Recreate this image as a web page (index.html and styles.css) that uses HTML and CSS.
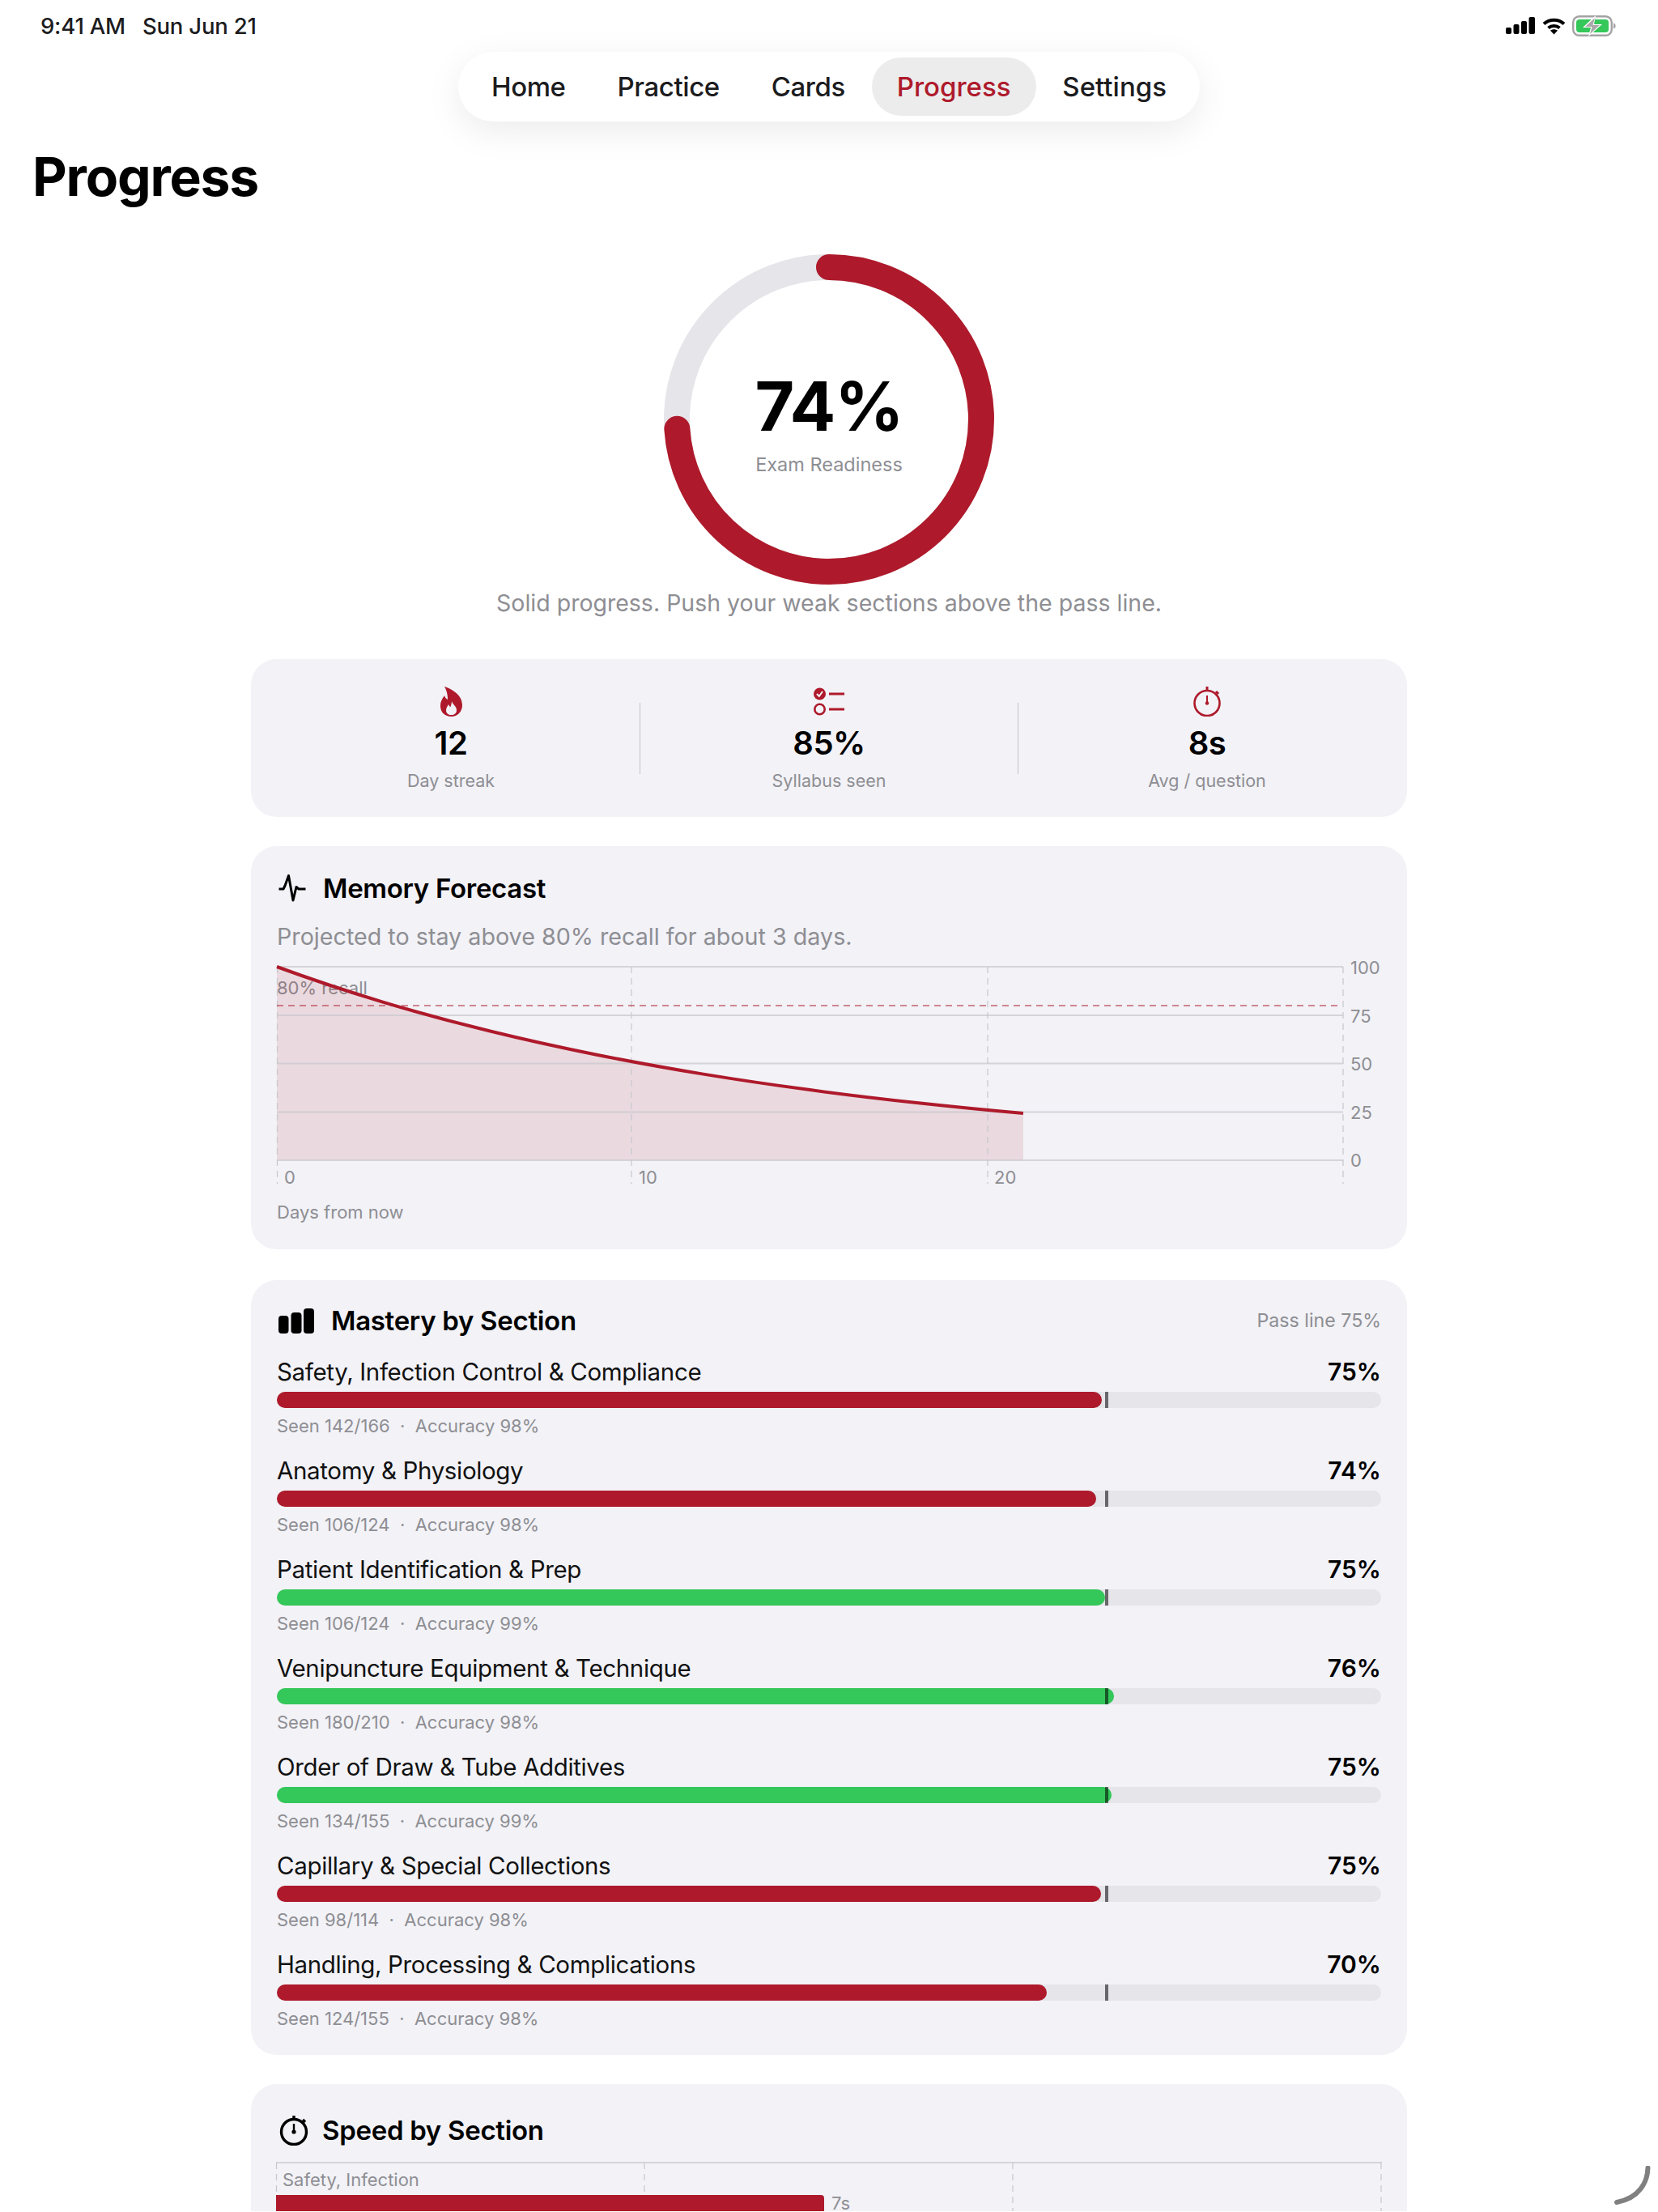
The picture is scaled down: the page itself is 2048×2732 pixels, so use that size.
FILE: index.html
```html
<!DOCTYPE html>
<html lang="en">
<head>
    <meta charset="UTF-8">
    <meta name="viewport" content="width=device-width, initial-scale=1.0">
    <title>Progress</title>
    <link rel="stylesheet" href="styles.css">
</head>
<body>
    <div class="status-bar">
        <div class="status-time"><span>9:41 AM</span><span>Sun Jun 21</span></div>
        <div class="status-icons">
            <svg width="37" height="22" viewBox="0 0 37 22"><rect x="0" y="13" width="7" height="8" rx="2"/><rect x="9.5" y="9" width="7" height="12" rx="2"/><rect x="19" y="5" width="7" height="16" rx="2"/><rect x="28.5" y="0" width="7.5" height="21" rx="2"/></svg>
            <svg width="29" height="21" viewBox="0 0 29 21"><path d="M2 7.5C9 1 20 1 27 7.5" class="wifi-arc"/><path d="M7.5 12.5C11.5 9 17.5 9 21.5 12.5" class="wifi-arc"/><path d="M14.5 20.5L10 15.8C12.6 13.8 16.4 13.8 19 15.8Z"/></svg>
            <svg width="54" height="26" viewBox="0 0 54 26"><rect x="1.2" y="1.2" width="47.6" height="23.6" rx="7.5" class="batt-shell"/><path d="M51 9.5C53 10 53.6 11.5 53.6 13S53 16 51 16.5Z" class="batt-nub"/><rect x="5" y="5" width="40" height="16" rx="4" class="batt-level"/><path d="M29 0L13 15H23L20 26L37 11H27Z" class="batt-gap"/><path d="M28 3L16 14H24.5L22 23L34 12H25.5Z" class="batt-bolt"/></svg>
        </div>
    </div>

    <nav class="top-nav">
        <a href="#home">Home</a>
        <a href="#practice">Practice</a>
        <a href="#cards">Cards</a>
        <a href="#progress" class="active">Progress</a>
        <a href="#settings">Settings</a>
    </nav>

    <h1 class="page-title">Progress</h1>

    <main class="content">
        <section class="readiness">
            <div class="ring">
                <svg width="408" height="408" viewBox="0 0 408 408">
                    <circle cx="204" cy="204" r="188" class="ring-track"/>
                    <circle cx="204" cy="204" r="188" class="ring-fill" pathLength="100" stroke-dasharray="74 100" transform="rotate(-90 204 204)"/>
                </svg>
                <div class="ring-label">
                    <div class="ring-value">74%</div>
                    <div class="ring-caption">Exam Readiness</div>
                </div>
            </div>
            <p class="readiness-note">Solid progress. Push your weak sections above the pass line.</p>
        </section>

        <section class="card stats">
            <div class="stat">
                <svg class="stat-icon" width="27" height="37" viewBox="0 0 27 37">
                    <path class="icon-red" d="M5 0C14 3 27 10 27 23C27 31 21 37 13.5 37C6 37 0 32 0 24C0 18 3 14 5 11C6 14 7 15 9 16C9 10 8 5 5 0Z"/>
                    <path class="icon-cut" d="M14 18C15 22 20 24 20 29C20 33 17 35 13.5 35C10 35 7 33 7 29C7 26 9 24 10 22C11 24 11.5 25 12.5 25C13 23 14 21 14 18Z"/>
                </svg>
                <div class="stat-value">12</div>
                <div class="stat-label">Day streak</div>
            </div>
            <div class="stat-sep"></div>
            <div class="stat">
                <svg class="stat-icon" width="38" height="37" viewBox="0 0 38 37">
                    <circle class="icon-red" cx="7.5" cy="9" r="7.5"/>
                    <path class="icon-tick" d="M4 9L6.8 12L11 6"/>
                    <circle class="icon-ring" cx="7.5" cy="28" r="6.2"/>
                    <path class="icon-dash" d="M19 9H38M19 28H38"/>
                </svg>
                <div class="stat-value">85%</div>
                <div class="stat-label">Syllabus seen</div>
            </div>
            <div class="stat-sep"></div>
            <div class="stat">
                <svg class="stat-icon" width="38" height="37" viewBox="0 0 38 37">
                    <circle class="icon-ring" cx="19" cy="20.5" r="15.5"/>
                    <path class="icon-dash" d="M19 0V5M30 6L33 9"/>
                    <path class="icon-hand" d="M19 11V20"/>
                    <circle class="icon-red" cx="19" cy="20.5" r="2.2"/>
                </svg>
                <div class="stat-value">8s</div>
                <div class="stat-label">Avg / question</div>
            </div>
        </section>

        <section class="card forecast">
            <div class="card-head">
                <svg class="head-icon" width="34" height="34" viewBox="0 0 34 34"><path class="wave" d="M0.5 18H6L8 14L12.5 1.5L18 32L22 15.5L25 18H33.5"/></svg>
                <h2>Memory Forecast</h2>
            </div>
            <p class="card-sub">Projected to stay above 80% recall for about 3 days.</p>
            <svg class="chart" width="1363" height="280" viewBox="0 -4 1363 280">
                <text x="0" y="34" class="axis-text">80% recall</text>
                <path class="curve-area" d="M0 0C43.9 16.1 87.8 30.6 131.7 43.8C175.6 57 219.5 68.8 263.4 79.5C307.3 90.3 351.2 99.9 395.1 108.7C439 117.5 482.9 125.4 526.8 132.6C570.7 139.8 614.6 146.2 658.5 152.1C702.4 158 746.3 163.2 790.2 168C834.1 172.8 878 177.1 921.9 181V239H0Z"/>
                <path class="grid-h" d="M0 0H1317M0 60H1317M0 119.5H1317M0 179.5H1317M0 239H1317"/>
                <path class="grid-v" d="M0.5 0V268M438 0V268M878 0V268M1317 0V268"/>
                <path class="goal-line" d="M0 48H1310"/>
                <path class="curve-line" d="M0 0C43.9 16.1 87.8 30.6 131.7 43.8C175.6 57 219.5 68.8 263.4 79.5C307.3 90.3 351.2 99.9 395.1 108.7C439 117.5 482.9 125.4 526.8 132.6C570.7 139.8 614.6 146.2 658.5 152.1C702.4 158 746.3 163.2 790.2 168C834.1 172.8 878 177.1 921.9 181"/>
                <text x="1326" y="9" class="axis-text">100</text>
                <text x="1326" y="69" class="axis-text">75</text>
                <text x="1326" y="128" class="axis-text">50</text>
                <text x="1326" y="188" class="axis-text">25</text>
                <text x="1326" y="247" class="axis-text">0</text>
                <text x="9" y="268" class="axis-text">0</text>
                <text x="447" y="268" class="axis-text">10</text>
                <text x="886" y="268" class="axis-text">20</text>
            </svg>
            <div class="chart-note">Days from now</div>
        </section>

        <section class="card mastery">
            <div class="card-head">
                <svg class="head-icon" width="44" height="31" viewBox="0 0 44 31"><rect x="0" y="9" width="12.5" height="22" rx="4"/><rect x="15.5" y="5" width="13" height="26" rx="4"/><rect x="31" y="0" width="13" height="31" rx="4"/></svg>
                <h2>Mastery by Section</h2>
                <span class="head-note">Pass line 75%</span>
            </div>
            <div class="section-row">
                <div class="row-top"><span>Safety, Infection Control &amp; Compliance</span><b>75%</b></div>
                <div class="bar"><div class="bar-fill" style="width:74.7%"></div><div class="bar-mark"></div></div>
                <div class="row-meta">Seen 142/166 &nbsp;·&nbsp; Accuracy 98%</div>
            </div>
            <div class="section-row">
                <div class="row-top"><span>Anatomy &amp; Physiology</span><b>74%</b></div>
                <div class="bar"><div class="bar-fill" style="width:74.2%"></div><div class="bar-mark"></div></div>
                <div class="row-meta">Seen 106/124 &nbsp;·&nbsp; Accuracy 98%</div>
            </div>
            <div class="section-row">
                <div class="row-top"><span>Patient Identification &amp; Prep</span><b>75%</b></div>
                <div class="bar"><div class="bar-fill good" style="width:75%"></div><div class="bar-mark"></div></div>
                <div class="row-meta">Seen 106/124 &nbsp;·&nbsp; Accuracy 99%</div>
            </div>
            <div class="section-row">
                <div class="row-top"><span>Venipuncture Equipment &amp; Technique</span><b>76%</b></div>
                <div class="bar"><div class="bar-fill good" style="width:75.8%"></div><div class="bar-mark"></div></div>
                <div class="row-meta">Seen 180/210 &nbsp;·&nbsp; Accuracy 98%</div>
            </div>
            <div class="section-row">
                <div class="row-top"><span>Order of Draw &amp; Tube Additives</span><b>75%</b></div>
                <div class="bar"><div class="bar-fill good" style="width:75.6%"></div><div class="bar-mark"></div></div>
                <div class="row-meta">Seen 134/155 &nbsp;·&nbsp; Accuracy 99%</div>
            </div>
            <div class="section-row">
                <div class="row-top"><span>Capillary &amp; Special Collections</span><b>75%</b></div>
                <div class="bar"><div class="bar-fill" style="width:74.6%"></div><div class="bar-mark"></div></div>
                <div class="row-meta">Seen 98/114 &nbsp;·&nbsp; Accuracy 98%</div>
            </div>
            <div class="section-row">
                <div class="row-top"><span>Handling, Processing &amp; Complications</span><b>70%</b></div>
                <div class="bar"><div class="bar-fill" style="width:69.7%"></div><div class="bar-mark"></div></div>
                <div class="row-meta">Seen 124/155 &nbsp;·&nbsp; Accuracy 98%</div>
            </div>
        </section>

        <section class="card speed">
            <div class="card-head">
                <svg class="head-icon" width="38" height="38" viewBox="0 0 38 38">
                    <circle class="stroke-dark" cx="19" cy="21" r="15.5"/>
                    <path class="stroke-dark" d="M19 1V6M30 6L33 9"/>
                    <path class="hand-dark" d="M19 11V21"/>
                    <circle cx="19" cy="21" r="2.6"/>
                </svg>
                <h2>Speed by Section</h2>
            </div>
            <svg class="chart speed-chart" width="1366" height="61" viewBox="0 0 1366 61">
                <path class="grid-h" d="M0 1H1366"/>
                <path class="grid-v" d="M0.5 1V61M455 1V61M910 1V61M1365 1V61"/>
                <text x="8" y="30" class="axis-text">Safety, Infection</text>
                <path class="speed-bar" d="M0 41H673A4 4 0 0 1 677 45V61H0Z"/>
                <text x="686" y="59" class="axis-text">7s</text>
            </svg>
        </section>
    </main>

    <!-- pencil hover stroke in the corner -->
    <svg class="scribble" width="48" height="50" viewBox="0 0 48 50"><path d="M43.5 2.5C43 20 33 40 5 45" /></svg>
</body>
</html>
```

FILE: styles.css
```css
html, body {
    margin: 0;
    height: 2732px;
    overflow: hidden;
    background: #fff;
}
body {
    position: relative;
    font-family: Inter, "Liberation Sans", sans-serif;
    color: #000;
}
h1, h2, p {
    margin: 0;
}

/* status bar */
.status-bar {
    height: 64px;
    padding: 0 52px 0 50px;
    display: flex;
    justify-content: space-between;
    align-items: center;
    box-sizing: border-box;
}
.status-time {
    display: flex;
    gap: 21px;
    font-size: 27.5px;
    font-weight: 500;
    letter-spacing: -0.2px;
    color: #1c1c1e;
}
.status-icons {
    display: flex;
    align-items: center;
    gap: 8px;
}
.wifi-arc {
    fill: none;
    stroke: #000;
    stroke-width: 4;
}
.batt-shell {
    fill: none;
    stroke: #a3a3a3;
    stroke-width: 2.4;
}
.batt-nub {
    fill: #a3a3a3;
}
.batt-level {
    fill: #34c759;
}
.batt-gap {
    fill: #fff;
}
.batt-bolt {
    fill: #a9a9a9;
}

/* top tabs */
.top-nav {
    width: 916px;
    height: 86px;
    margin: 0 auto;
    padding: 7px 10px;
    box-sizing: border-box;
    display: flex;
    justify-content: space-between;
    background: #fff;
    border-radius: 43px;
    box-shadow: 0 12px 44px rgba(0, 0, 0, 0.08);
}
.top-nav a {
    padding: 0 31px;
    line-height: 72px;
    border-radius: 36px;
    font-size: 33px;
    font-weight: 500;
    letter-spacing: -0.4px;
    color: #1c1c1e;
    text-decoration: none;
}
.top-nav a:last-child {
    letter-spacing: 0;
}
.top-nav a.active {
    background: #ececed;
    color: #ae1a2b;
    letter-spacing: 0;
}

.page-title {
    margin: 28px 0 0 40px;
    font-size: 66px;
    line-height: 80px;
    font-weight: 700;
    letter-spacing: -1.2px;
}

.content {
    width: 1428px;
    margin: 56px auto 0;
    display: flex;
    flex-direction: column;
    gap: 36px;
}

/* readiness ring */
.readiness {
    display: flex;
    flex-direction: column;
    align-items: center;
    margin-bottom: 13px;
}
.ring {
    position: relative;
    width: 408px;
    height: 408px;
}
.ring svg {
    display: block;
}
.ring-track, .ring-fill {
    fill: none;
    stroke-width: 32;
}
.ring-track {
    stroke: #e5e5ea;
}
.ring-fill {
    stroke: #ae1a2b;
    stroke-linecap: round;
}
.ring-label {
    position: absolute;
    inset: 0;
    padding-top: 143px;
    box-sizing: border-box;
    text-align: center;
}
.ring-value {
    font-size: 84px;
    line-height: 90px;
    font-weight: 700;
    letter-spacing: -1px;
}
.ring-caption {
    margin-top: 11px;
    font-size: 23.5px;
    line-height: 32px;
    color: #8e8e93;
}
.readiness-note {
    margin-top: 3px;
    font-size: 28.5px;
    line-height: 40px;
    color: #8e8e93;
}

/* cards */
.card {
    background: #f2f2f7;
    border-radius: 32px;
    padding: 30px 32px 32px;
}
.card-head {
    display: flex;
    align-items: center;
    height: 44px;
    gap: 21px;
}
.card-head h2 {
    font-size: 33px;
    line-height: 44px;
    font-weight: 600;
    letter-spacing: -0.3px;
}
.head-icon {
    flex: none;
    margin-left: 2px;
}
.head-note {
    margin-left: auto;
    font-size: 23.2px;
    color: #8e8e93;
}
.card-sub {
    margin-top: 18px;
    font-size: 28.7px;
    line-height: 40px;
    color: #8e8e93;
}
.wave {
    fill: none;
    stroke: #000;
    stroke-width: 3;
    stroke-linejoin: round;
}

/* stats */
.stats {
    display: flex;
    align-items: flex-start;
    padding: 34px 14px 31px;
}
.stat {
    flex: 1;
    display: flex;
    flex-direction: column;
    align-items: center;
}
.stat-icon {
    display: block;
}
.stat-value {
    margin-top: 9px;
    font-size: 40px;
    line-height: 48px;
    font-weight: 600;
    letter-spacing: -0.5px;
}
.stat-label {
    margin-top: 8px;
    font-size: 21.5px;
    line-height: 28px;
    color: #8e8e93;
}
.stat-sep {
    width: 1px;
    height: 88px;
    margin-top: 20px;
    background: #c6c6c8;
}
.icon-red {
    fill: #ae1a2b;
}
.icon-cut {
    fill: #f2f2f7;
}
.icon-tick {
    fill: none;
    stroke: #f2f2f7;
    stroke-width: 2;
}
.icon-ring {
    fill: none;
    stroke: #ae1a2b;
    stroke-width: 2.6;
}
.icon-dash {
    fill: none;
    stroke: #ae1a2b;
    stroke-width: 3;
}
.icon-hand {
    fill: none;
    stroke: #ae1a2b;
    stroke-width: 2;
}

/* charts */
.chart {
    display: block;
    overflow: visible;
    margin-top: 13px;
}
.axis-text {
    font-size: 22px;
    fill: #8e8e93;
}
.curve-area {
    fill: #ae1a2b;
    fill-opacity: 0.11;
}
.curve-line {
    fill: none;
    stroke: #ae1a2b;
    stroke-width: 4;
}
.grid-h {
    fill: none;
    stroke: #c7c7cc;
    stroke-opacity: 0.7;
    stroke-width: 2;
}
.grid-v {
    fill: none;
    stroke: #c7c7cc;
    stroke-width: 1.2;
    stroke-dasharray: 8 6;
}
.goal-line {
    fill: none;
    stroke: #ae1a2b;
    stroke-opacity: 0.5;
    stroke-width: 2;
    stroke-dasharray: 8 6;
}
.chart-note {
    margin-top: 13px;
    font-size: 22px;
    line-height: 28px;
    color: #8e8e93;
}

/* mastery rows */
.mastery {
    padding-top: 28px;
    padding-bottom: 31px;
    margin-top: 2px;
}
.mastery .card-head {
    margin-bottom: 22px;
    gap: 21px;
}
.section-row {
    margin-bottom: 22px;
}
.section-row:last-child {
    margin-bottom: 0;
}
.row-top {
    display: flex;
    justify-content: space-between;
    font-size: 29.5px;
    line-height: 38px;
}
.row-top span {
    letter-spacing: -0.35px;
    color: #111;
}
.row-top b {
    font-weight: 600;
    font-size: 30px;
}
.bar {
    position: relative;
    height: 20px;
    margin-top: 6px;
    background: #e5e5ea;
    border-radius: 10px;
}
.bar-fill {
    height: 100%;
    background: #ae1a2b;
    border-radius: 10px;
}
.bar-fill.good {
    background: #34c759;
}
.bar-mark {
    position: absolute;
    left: 75%;
    top: 0;
    bottom: 0;
    width: 4px;
    background: rgba(0, 0, 0, 0.55);
}
.row-meta {
    margin-top: 8px;
    font-size: 22px;
    line-height: 28px;
    color: #8e8e93;
}

/* speed runs off the bottom of the screen */
.speed {
    height: 157px;
    box-sizing: border-box;
    padding-top: 35px;
    padding-bottom: 0;
    border-radius: 32px 32px 0 0;
}
.speed .card-head {
    gap: 16px;
}
.speed-chart {
    margin-left: -1px;
    margin-top: 17px;
}
.speed-bar {
    fill: #ae1a2b;
}
.stroke-dark {
    fill: none;
    stroke: #000;
    stroke-width: 3.4;
}
.hand-dark {
    fill: none;
    stroke: #000;
    stroke-width: 2.4;
}

.scribble {
    position: absolute;
    left: 1992px;
    top: 2675px;
}
.scribble path {
    fill: none;
    stroke: #808080;
    stroke-width: 6;
    stroke-linecap: round;
}
```
